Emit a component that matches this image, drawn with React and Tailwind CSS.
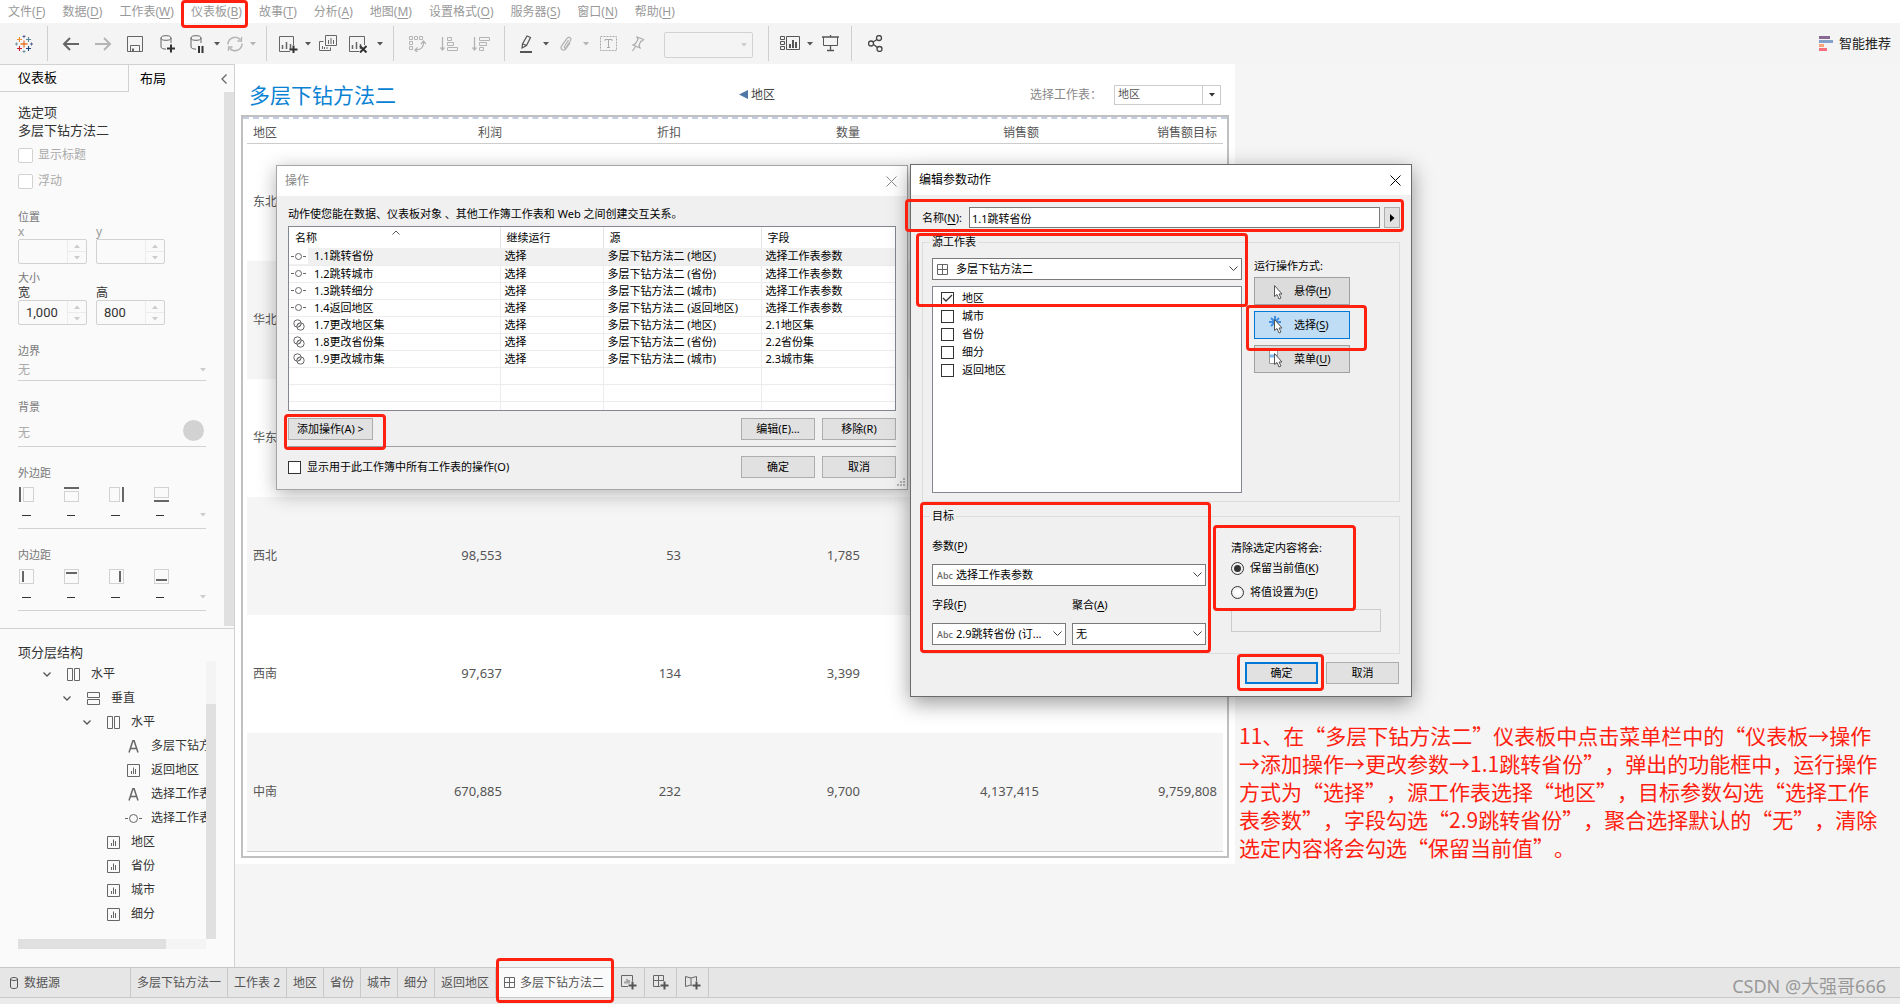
import { Fragment, useState } from 'react';

const MENUS = [
  ['文件', 'F'], ['数据', 'D'], ['工作表', 'W'], ['仪表板', 'B'], ['故事', 'T'], ['分析', 'A'],
  ['地图', 'M'], ['设置格式', 'O'], ['服务器', 'S'], ['窗口', 'N'], ['帮助', 'H'],
];

const REGIONS = [
  { name: '东北', values: ['', '', '', '', ''] },
  { name: '华北', values: ['', '', '', '', ''] },
  { name: '华东', values: ['', '', '', '', ''] },
  { name: '西北', values: ['98,553', '53', '1,785', '', ''] },
  { name: '西南', values: ['97,637', '134', '3,399', '', ''] },
  { name: '中南', values: ['670,885', '232', '9,700', '4,137,415', '9,759,808'] },
];

const ACTIONS = [
  { icon: 'param', name: '1.1跳转省份', source: '地区', field: '选择工作表参数' },
  { icon: 'param', name: '1.2跳转城市', source: '省份', field: '选择工作表参数' },
  { icon: 'param', name: '1.3跳转细分', source: '城市', field: '选择工作表参数' },
  { icon: 'param', name: '1.4返回地区', source: '返回地区', field: '选择工作表参数' },
  { icon: 'set', name: '1.7更改地区集', source: '地区', field: '2.1地区集' },
  { icon: 'set', name: '1.8更改省份集', source: '省份', field: '2.2省份集' },
  { icon: 'set', name: '1.9更改城市集', source: '城市', field: '2.3城市集' },
];

const TREE = [
  { indent: 'pl-[20px]', open: true, icon: 'horizontal', label: '水平' },
  { indent: 'pl-[40px]', open: true, icon: 'vertical', label: '垂直' },
  { indent: 'pl-[60px]', open: true, icon: 'horizontal', label: '水平' },
  { indent: 'pl-[80px]', icon: 'text', label: '多层下钻方法二' },
  { indent: 'pl-[80px]', icon: 'sheet', label: '返回地区' },
  { indent: 'pl-[80px]', icon: 'text', label: '选择工作表' },
  { indent: 'pl-[80px]', icon: 'param', label: '选择工作表' },
  { indent: 'pl-[60px]', icon: 'sheet', label: '地区' },
  { indent: 'pl-[60px]', icon: 'sheet', label: '省份' },
  { indent: 'pl-[60px]', icon: 'sheet', label: '城市' },
  { indent: 'pl-[60px]', icon: 'sheet', label: '细分' },
];

const SHEETS = ['多层下钻方法一', '工作表 2', '地区', '省份', '城市', '细分', '返回地区'];

/* ---------- icons ---------- */

const Icon = ({ w = 18, h = 18, className = '', children }) => (
  <svg
    width={w}
    height={h}
    viewBox={`0 0 ${w} ${h}`}
    fill="none"
    stroke="currentColor"
    className={`shrink-0 ${className}`}
    aria-hidden="true"
  >
    {children}
  </svg>
);

const LogoIcon = () => (
  <Icon w={18} h={18}>
    <path d="M9 5.5v7M5.5 9h7" stroke="#e8762d" strokeWidth="1.3" />
    <path d="M4.5 2v5M2 4.5h5" stroke="#eb912c" strokeWidth="1.1" />
    <path d="M13.5 2v5M11 4.5h5" stroke="#5b879b" strokeWidth="1.1" />
    <path d="M4.5 11v5M2 13.5h5" stroke="#c72035" strokeWidth="1.1" />
    <path d="M13.5 11v5M11 13.5h5" stroke="#1f457e" strokeWidth="1.1" />
    <path d="M9 0v3M7.500 1.500h3" stroke="#5c6692" />
    <path d="M9 15v3M7.500 16.500h3" stroke="#7199a6" />
    <path d="M1.500 7.500v3M0 9h3" stroke="#7199a6" />
    <path d="M16.500 7.500v3M15 9h3" stroke="#5c6692" />
  </Icon>
);

const Arrow = ({ flip }) => (
  <Icon w={18} h={16} className={flip ? 'text-[#b4b4b4]' : 'text-[#666]'}>
    <path d={flip ? 'M1 8h15M10 2l6 6-6 6' : 'M17 8H2M8 2L2 8l6 6'} strokeWidth="2" />
  </Icon>
);

const SaveIcon = () => (
  <Icon w={16} h={16}>
    <path d="M.5.5h15v15H.5zM3.500 15.500v-6h9v6M5.500 15v-2.500M6.500 15v-2.500" />
  </Icon>
);

const Database = () => (
  <>
    <ellipse cx="6" cy="3" rx="5" ry="2.300" />
    <path d="M1 3v9c0 1.200 2 2 5 2.200M11 3v5" />
  </>
);

const AddDataIcon = () => (
  <Icon w={15} h={18}>
    <Database />
    <path d="M11 9.500v8M7 13.500h8" stroke="#333" strokeWidth="2" />
  </Icon>
);

const PauseDataIcon = () => (
  <Icon w={14} h={18}>
    <Database />
    <path d="M9 11v7M12.500 11v7" stroke="#333" strokeWidth="2" />
  </Icon>
);

const RefreshIcon = () => (
  <Icon w={18} h={16} className="text-[#b4b4b4]">
    <path d="M2 8.500A7 7 0 0 1 14.500 4M16 7.500A7 7 0 0 1 3.500 12" strokeWidth="1.500" />
    <path d="M15.500 1v4h-4M2.500 15v-4h4" strokeWidth="1.300" />
  </Icon>
);

const Bars = ({ x = 4, y = 12 }) => (
  <path d={`M${x} ${y}v-4M${x + 4} ${y}v-7M${x + 8} ${y}v-5`} strokeWidth="1.500" />
);

const NewSheetIcon = () => (
  <Icon w={20} h={18}>
    <path d="M12 16.500H1.500v-15h14V10" />
    <Bars x={4.5} y={14} />
    <path d="M15.500 10.500v8M11.500 14.500h8" stroke="#333" strokeWidth="2" />
  </Icon>
);

const DuplicateIcon = () => (
  <Icon w={18} h={17}>
    <path d="M6.500.5h11v10h-11zM4.500 6.500h-4v9h11v-3M9.500 9V5M12 9V3M14.500 9V5M3.500 14v-3M5.500 14v-2M8 14v-2" />
  </Icon>
);

const ClearSheetIcon = () => (
  <Icon w={20} h={18}>
    <path d="M11 16.500H1.500v-15h15V10" />
    <Bars x={4.5} y={14} />
    <path d="M12 11l6.500 6.500M18.500 11L12 17.500" stroke="#333" strokeWidth="2" />
  </Icon>
);

const SwapIcon = () => (
  <Icon w={18} h={17} className="text-[#b4b4b4]">
    <path d="M1.500 1.500h3v3h-3zM6.500 1.500h3v3h-3zM11.500 1.500h3v3h-3zM1.500 6.500h3v3h-3zM1.500 11.500h3v3h-3z" />
    <path d="M15.500 7c.5 5-2.500 8-8 8M13 9l2.500-3 2.500 3M9.500 12.500L7 15l2.500 2.500" strokeWidth="1.300" />
  </Icon>
);

const SortIcon = ({ desc }) => (
  <Icon w={18} h={16} className="text-[#b4b4b4]">
    <path d="M2.500 1v13M.5 11.500l2 2.500 2-2.500" strokeWidth="1.300" />
    <path
      d={
        desc
          ? 'M7.500 1.500h10v3h-10zM7.500 6.500h7v3h-7zM7.500 11.500h4v3h-4z'
          : 'M7.500 1.500h4v3h-4zM7.500 6.500h6v3h-6zM7.500 11.500h10v3h-10z'
      }
    />
  </Icon>
);

const HighlightIcon = () => (
  <Icon w={14} h={18} className="text-[#555]">
    <path d="M3 13l.5-4L8 1l3.500 1.500L7.500 10.500 3 13zM4 9l3.500 1.500" strokeWidth="1.200" />
    <path d="M1 17h12" strokeWidth="2" />
  </Icon>
);

const ClipIcon = () => (
  <Icon w={14} h={16} className="text-[#b4b4b4]">
    <path
      d="M9.500 4L5.500 10.500c-.8 1.400.8 2.300 1.600 1L11.500 4.500c1.500-2.600-2-4.500-3.500-2L2.500 10c-1.800 3.200 2.500 5.800 4.500 2.700L11 7"
      strokeWidth="1.300"
    />
  </Icon>
);

const TextLabelIcon = () => (
  <Icon w={17} h={15} className="text-[#aaa]">
    <path d="M.5.5h16v14H.5z" strokeDasharray="2 1" />
    <path d="M5 5V3.500h7V5M8.500 3.500v8M7 11.500h3" />
  </Icon>
);

const PinIcon = () => (
  <Icon w={14} h={16} className="text-[#aaa]">
    <path d="M6 1l6.500 2.500-1 1.500-1.500 0-2 4 1 3-7-3 2.500-1.500 2.500-4zM4.500 10.500L1.500 15" strokeWidth="1.200" />
  </Icon>
);

const CardsIcon = () => (
  <Icon w={20} h={15} className="text-[#555]">
    <path d="M.5.5h4v3h-4zM.5 5.500h4v3h-4zM.5 10.500h4v3h-4zM6.500.5h13v13h-13z" />
    <path d="M10 12V8M13 12V4M16 12V6" strokeWidth="2" />
  </Icon>
);

const PresentIcon = () => (
  <Icon w={17} h={17} className="text-[#555]">
    <path d="M0 2h17M8.500 0v2M8.500 11v4M5 15.500h7" strokeWidth="1.300" />
    <path d="M1.500 2v8.500h14V2" />
  </Icon>
);

const ShareIcon = () => (
  <Icon w={15} h={17} className="text-[#444]">
    <circle cx="11" cy="3" r="2.500" strokeWidth="1.300" />
    <circle cx="3" cy="8.500" r="2.500" strokeWidth="1.300" />
    <circle cx="11.500" cy="14" r="2.500" strokeWidth="1.300" />
    <path d="M5 7l4-2.500M5.500 9.500l4 3" strokeWidth="1.300" />
  </Icon>
);

const ShowMeIcon = () => (
  <Icon w={14} h={15}>
    <path d="M0 1.500h11" stroke="#8a6a94" strokeWidth="3" />
    <path d="M0 5.500h14" stroke="#84a1cb" strokeWidth="3" />
    <path d="M0 9.500h5" stroke="#f8a378" strokeWidth="3" />
    <path d="M0 13.500h8" stroke="#fa6f7e" strokeWidth="3" />
  </Icon>
);

const Caret = ({ className = 'text-[#555]' }) => (
  <Icon w={6} h={4} className={className}>
    <path d="M0 0h6L3 3.500z" fill="currentColor" stroke="none" />
  </Icon>
);

const Chevron = () => (
  <Icon w={9} h={6} className="text-[#444]">
    <path d="M.5.5l4 4 4-4" />
  </Icon>
);

const DashboardIcon = () => (
  <Icon w={11} h={11} className="text-[#666]">
    <path d="M.5.5h10v10H.5zM5.500.5v10M.5 5.500h10" />
  </Icon>
);

const ParamIcon = () => (
  <Icon w={17} h={11} className="text-[#666]">
    <path d="M0 5.500h3M14 5.500h3" />
    <circle cx="8.500" cy="5.500" r="4" />
  </Icon>
);

const ActionIcon = ({ kind }) =>
  kind === 'param' ? (
    <Icon w={15} h={9} className="text-[#666]">
      <path d="M0 4.500h3M12 4.500h3" />
      <circle cx="7.500" cy="4.500" r="3" />
    </Icon>
  ) : (
    <Icon w={12} h={12} className="text-[#666]">
      <circle cx="4.500" cy="4.500" r="3.700" />
      <circle cx="7.500" cy="7.500" r="3.700" />
      <path d="M4 6.500L6.500 4M5.500 8L8 5.500" />
    </Icon>
  );

const TreeIcon = ({ kind }) => {
  if (kind === 'param') return <ParamIcon />;
  return (
    <Icon w={13} h={13} className="text-[#666]">
      {kind === 'horizontal' && <path d="M.5.5h5v12h-5zM7.500.5h5v12h-5z" />}
      {kind === 'vertical' && <path d="M.5.5h12v5H.5zM.5 7.500h12v5H.5z" />}
      {kind === 'text' && <path d="M2 12.500L6 .5h1l4 12M3.500 8.500h6" strokeWidth="1.500" />}
      {kind === 'sheet' && <path d="M.5.5h12v12H.5zM4.500 10V7M6.500 10V3.500M8.500 10V5" />}
    </Icon>
  );
};

/* arrow cursor, with a burst or a menu behind it */
const RunIcon = ({ kind }) => (
  <Icon w={18} h={18}>
    {kind === 'select' && (
      <path d="M7 0v12M1 6h12M3 2l8 8M11 2l-8 8" stroke="#3d8ce0" strokeWidth="2" />
    )}
    {kind === 'menu' && (
      <>
        <path d="M1.500.5h8v13h-8z" fill="#fff" stroke="#999" />
        <path d="M2 6h7" stroke="#7db8f0" strokeWidth="3" />
      </>
    )}
    <path d="M6.500 3.500v11l2.500-2 2 4.500 2-1-2-4h3z" fill="#fff" stroke="#555" />
  </Icon>
);

const CloseIcon = ({ className }) => (
  <Icon w={11} h={11} className={className}>
    <path d="M.5.5l10 10M10.500.5l-10 10" />
  </Icon>
);

/* side: which edge the bar stands on; inner: bar inside the dotted box */
const SpacingIcon = ({ side, inner }) => {
  const outerBars = { left: 'M1 0v15', top: 'M0 1h15', right: 'M14 0v15', bottom: 'M0 14h15' };
  const innerBars = { left: 'M4 2v11', top: 'M2 4h11', right: 'M11 2v11', bottom: 'M2 11h11' };
  const outerBoxes = {
    left: 'M4.500.5h10v14h-10z',
    top: 'M.5 4.500h14v10H.5z',
    right: 'M.5.5h10v14H.5z',
    bottom: 'M.5.5h14v10H.5z',
  };
  return (
    <Icon w={15} h={15}>
      <path d={inner ? 'M.5.5h14v14H.5z' : outerBoxes[side]} stroke="#aaa" strokeDasharray="1 1" />
      <path d={inner ? innerBars[side] : outerBars[side]} stroke="#666" strokeWidth="2" />
    </Icon>
  );
};

/* ---------- shared controls ---------- */

const Label = ({ text, k, end = '' }) => (
  <>
    {text}(<u className="underline-offset-2">{k}</u>){end}
  </>
);

const ToolButton = ({ size = 'w-7', label, children }) => (
  <button type="button" aria-label={label} className={`flex h-8 shrink-0 items-center justify-center text-[#666] ${size}`}>
    {children}
  </button>
);

const Divider = () => <div className="mx-[7px] h-[35px] w-px shrink-0 bg-[#cfcfcf]" />;

const Dropdown = ({ id, label, options, icon, pad = 'pl-1', className = '' }) => (
  <div className={`grid h-[22px] items-center ${className}`}>
    <select
      id={id}
      aria-label={label}
      className={`col-start-1 row-start-1 h-full w-full appearance-none border border-[#7a7a7a] bg-white pr-4 ${pad}`}
    >
      {options.map((o) => (
        <option key={o}>{o}</option>
      ))}
    </select>
    {icon && <span className="pointer-events-none col-start-1 row-start-1 justify-self-start pl-[5px]">{icon}</span>}
    <span className="pointer-events-none col-start-1 row-start-1 justify-self-end pr-1">
      <Chevron />
    </span>
  </div>
);

const StringType = () => <span className="text-[9px] font-medium text-[#666]">Abc</span>;

const PushButton = ({ primary, className = 'w-[74px]', children }) => (
  <button
    type="button"
    className={`h-[22px] bg-[#e1e1e1] leading-4 ${primary ? 'border-2 border-[#0078d7]' : 'border border-[#adadad]'} ${className}`}
  >
    {children}
  </button>
);

const CheckBox = ({ id, defaultChecked, className }) => (
  <span className="grid shrink-0 place-items-center">
    <input
      id={id}
      type="checkbox"
      defaultChecked={defaultChecked}
      className={`peer col-start-1 row-start-1 appearance-none border bg-white ${className}`}
    />
    <Icon w={11} h={9} className="pointer-events-none invisible col-start-1 row-start-1 text-[#333] peer-checked:visible">
      <path d="M1 4l3 3 6-6" strokeWidth="1.300" />
    </Icon>
  </span>
);

const Spinner = ({ id, label, value = '', dark }) => (
  <div className="w-[69px]">
    <label htmlFor={id} className={`block text-[12px] leading-[14px] ${dark ? 'text-[#333]' : 'text-[#999]'}`}>
      {label}
    </label>
    <div className="flex h-[25px] rounded-xs border border-[#d2d2d2]">
      <input
        id={id}
        type="text"
        defaultValue={value}
        className="w-12 bg-transparent pl-[7px] font-[family-name:Roboto,sans-serif] text-[13px] text-[#333]"
      />
      <div className="flex flex-1 flex-col border-l border-[#ececec] text-[#ccc]">
        <button type="button" aria-label={`${label} +`} className="flex flex-1 items-center justify-center border-b border-[#ececec]">
          <Caret className="rotate-180" />
        </button>
        <button type="button" aria-label={`${label} -`} className="flex flex-1 items-center justify-center">
          <Caret className="" />
        </button>
      </div>
    </div>
  </div>
);

/* ---------- page parts ---------- */

const MenuBar = () => (
  <nav className="flex h-[23px] shrink-0 items-end gap-[17px] bg-white px-2 pb-0.5 text-[12px] text-[#999]">
    {MENUS.map(([text, k]) => (
      <button key={text} type="button" className="shrink-0 leading-[18px]">
        <Label text={text} k={k} />
      </button>
    ))}
  </nav>
);

const Toolbar = () => (
  <header className="flex h-[41px] shrink-0 items-center bg-[#f4f4f4] pr-[9px] pl-2">
    <ToolButton size="w-8" label="开始"><LogoIcon /></ToolButton>
    <Divider />
    <ToolButton size="w-8" label="撤销"><Arrow /></ToolButton>
    <ToolButton size="w-8" label="重做"><Arrow flip /></ToolButton>
    <ToolButton size="w-8" label="保存"><SaveIcon /></ToolButton>
    <ToolButton size="w-8" label="新建数据源"><AddDataIcon /></ToolButton>
    <ToolButton label="暂停自动更新"><PauseDataIcon /></ToolButton>
    <ToolButton size="w-3" label="更新选项"><Caret /></ToolButton>
    <ToolButton size="w-6" label="运行更新"><RefreshIcon /></ToolButton>
    <ToolButton size="w-3" label="运行选项"><Caret className="text-[#b4b4b4]" /></ToolButton>
    <Divider />
    <ToolButton label="新建工作表"><NewSheetIcon /></ToolButton>
    <ToolButton size="w-3" label="新建选项"><Caret /></ToolButton>
    <ToolButton label="复制"><DuplicateIcon /></ToolButton>
    <ToolButton size="w-8" label="清除"><ClearSheetIcon /></ToolButton>
    <ToolButton size="w-3" label="清除选项"><Caret /></ToolButton>
    <Divider />
    <ToolButton size="w-8" label="交换行和列"><SwapIcon /></ToolButton>
    <ToolButton size="w-8" label="升序"><SortIcon /></ToolButton>
    <ToolButton size="w-8" label="降序"><SortIcon desc /></ToolButton>
    <Divider />
    <ToolButton label="突出显示"><HighlightIcon /></ToolButton>
    <ToolButton size="w-3" label="突出显示选项"><Caret /></ToolButton>
    <ToolButton label="组成员"><ClipIcon /></ToolButton>
    <ToolButton size="w-3" label="组选项"><Caret className="text-[#b4b4b4]" /></ToolButton>
    <ToolButton size="w-8" label="显示标记标签"><TextLabelIcon /></ToolButton>
    <ToolButton label="固定轴"><PinIcon /></ToolButton>
    <div className="mr-2 ml-3 grid h-[23px] w-[89px] items-center">
      <select aria-label="适合" className="col-start-1 row-start-1 h-full w-full appearance-none rounded-xs border border-[#d2d2d2]" />
      <span className="pointer-events-none col-start-1 row-start-1 justify-self-end pr-1.5">
        <Caret className="text-[#ccc]" />
      </span>
    </div>
    <Divider />
    <ToolButton label="显示/隐藏卡"><CardsIcon /></ToolButton>
    <ToolButton size="w-3" label="卡选项"><Caret /></ToolButton>
    <ToolButton label="演示模式"><PresentIcon /></ToolButton>
    <Divider />
    <ToolButton size="w-8" label="共享"><ShareIcon /></ToolButton>
    <button type="button" className="ml-auto flex shrink-0 items-center gap-1.5 text-[13px] text-[#222]">
      <ShowMeIcon />
      智能推荐
    </button>
  </header>
);

const SpacingRow = ({ title, inner }) => (
  <section className="mt-[18px]">
    <h3 className="text-[11px] leading-4 text-[#777]">{title}</h3>
    <div className="mt-1.5 flex gap-[30px] pl-px">
      {['left', 'top', 'right', 'bottom'].map((side) => (
        <SpacingIcon key={side} side={side} inner={inner} />
      ))}
    </div>
    <div className="flex h-[27px] items-center gap-9 border-b border-[#d2d2d2] pl-1">
      {['left', 'top', 'right', 'bottom'].map((side) => (
        <span key={side} className="h-px w-[9px] bg-[#333]" />
      ))}
      <Caret className="ml-auto text-[#ccc]" />
    </div>
  </section>
);

const LayoutPanel = () => (
  <div className="flex shrink-0">
    <div className="min-w-0 flex-1 pt-[11px] pr-[18px] pb-[17px] pl-[18px]">
      <div className="text-[13px] leading-[18px] text-[#333]">
        <p>选定项</p>
        <p>多层下钻方法二</p>
      </div>
      <div className="mt-[3px] text-[12px] text-[#aaa]">
        {['显示标题', '浮动'].map((text) => (
          <div key={text} className="flex h-[26px] items-center gap-[5px]">
            <CheckBox id={text} className="size-[15px] rounded-xs border-[#d2d2d2]" />
            <label htmlFor={text}>{text}</label>
          </div>
        ))}
      </div>
      <h3 className="mt-[15px] text-[11px] leading-4 text-[#777]">位置</h3>
      <div className="flex gap-[9px]">
        <Spinner id="pos-x" label="x" />
        <Spinner id="pos-y" label="y" />
      </div>
      <h3 className="mt-1.5 text-[11px] leading-4 text-[#777]">大小</h3>
      <div className="flex gap-[9px]">
        <Spinner id="size-w" label="宽" value="1,000" dark />
        <Spinner id="size-h" label="高" value="800" dark />
      </div>
      <label htmlFor="border" className="mt-[18px] block text-[11px] leading-4 text-[#777]">边界</label>
      <div className="grid h-[22px] items-center border-b border-[#d2d2d2] text-[12px] text-[#aaa]">
        <select id="border" className="col-start-1 row-start-1 w-full appearance-none">
          <option>无</option>
        </select>
        <span className="pointer-events-none col-start-1 row-start-1 justify-self-end">
          <Caret className="text-[#ccc]" />
        </span>
      </div>
      <h3 className="mt-[18px] text-[11px] leading-4 text-[#777]">背景</h3>
      <div className="flex h-8 items-end justify-between border-b border-[#d2d2d2] pr-0.5 pb-[5px] text-[12px] leading-4 text-[#aaa]">
        <span>无</span>
        <button type="button" aria-label="背景颜色" className="size-[21px] rounded-full bg-[#d2d2d2]" />
      </div>
      <SpacingRow title="外边距" />
      <SpacingRow title="内边距" inner />
    </div>
    <div className="mb-0.5 w-2.5 bg-[#e0e0e0]" />
  </div>
);

const HierarchyPanel = () => (
  <section className="flex min-h-0 flex-1 flex-col border-t border-[#d2d2d2] pt-3.5 pr-[18px] pb-[18px] pl-[18px] text-[#333]">
    <h3 className="text-[13px] leading-[18px]">项分层结构</h3>
    <div className="flex min-h-0 flex-1">
      <ul className="min-w-0 flex-1 overflow-hidden pt-px text-[12px]">
        {TREE.map((node, i) => (
          <li key={i} className={`flex h-6 items-center whitespace-nowrap ${node.indent}`}>
            <span className="flex w-[18px] shrink-0 justify-center">
              {node.open && (
                <Icon w={8} h={5} className="text-[#555]">
                  <path d="M.5.5L4 4 7.500.5" strokeWidth="1.300" />
                </Icon>
              )}
            </span>
            <span className="flex w-[35px] shrink-0 justify-center">
              <TreeIcon kind={node.icon} />
            </span>
            <span>{node.label}</span>
          </li>
        ))}
      </ul>
      <div className="flex w-2.5 flex-col bg-[#f4f4f4] pt-[43px]">
        <div className="flex-1 bg-[#e0e0e0]" />
      </div>
    </div>
    <div className="mr-2.5 h-2.5 bg-[#f4f4f4] pr-10">
      <div className="h-full bg-[#e0e0e0]" />
    </div>
  </section>
);

const SideBar = () => (
  <aside className="flex w-[235px] shrink-0 flex-col border-t border-r border-[#d2d2d2] bg-[#fafafa]">
    <div className="flex h-[27px] shrink-0 text-[13px] text-black">
      <button type="button" className="w-[129px] border-r border-b border-[#d2d2d2] pl-[18px] text-left">仪表板</button>
      <button type="button" className="pl-[11px]">布局</button>
      <button type="button" aria-label="折叠" className="mr-[7px] ml-auto">
        <Icon w={6} h={10} className="text-[#666]">
          <path d="M5.500.5L1 5l4.500 4.500" strokeWidth="1.300" />
        </Icon>
      </button>
    </div>
    <LayoutPanel />
    <HierarchyPanel />
  </aside>
);

const Dashboard = () => (
  <main className="flex h-[800px] w-[1000px] shrink-0 flex-col bg-white px-1.5 pb-1.5 text-[12px] text-[#555]">
    <div className="flex h-[51px] items-center pt-2.5 pl-2">
      <h1 className="w-[490px] text-[21px] leading-7 text-[#0a82d4]">多层下钻方法二</h1>
      <a href="#region" className="flex items-center gap-[3px] text-[#444]">
        <Icon w={9} h={9}>
          <path d="M9 0v9L0 4.500z" fill="#4e79a7" stroke="none" />
        </Icon>
        地区
      </a>
      <label htmlFor="sheet-param" className="ml-auto pr-3 text-[#888]">选择工作表：</label>
      <div className="mr-2 grid h-5 w-[107px] items-center">
        <select
          id="sheet-param"
          className="col-start-1 row-start-1 h-full w-full appearance-none border border-[#ccc] bg-white pl-[3px] text-[11px] text-[#555]"
        >
          <option>地区</option>
        </select>
        <span className="pointer-events-none col-start-1 row-start-1 flex h-full w-[19px] items-center justify-center justify-self-end border-l border-[#ccc]">
          <Caret className="text-[#333]" />
        </span>
      </div>
    </div>
    <div className="flex min-h-0 flex-1 flex-col border-2 border-[#c0c0c0]">
      <div className="border-t-2 border-dashed border-[#c3cee2]" />
      <div className="mx-1 border-b border-[#ccc]">
        <table className="w-full table-fixed">
          <colgroup>
            <col className="w-[82px]" />
            <col className="w-[179px]" />
            <col className="w-[179px]" />
            <col className="w-[179px]" />
            <col className="w-[179px]" />
            <col />
          </colgroup>
          <thead>
            <tr className="h-[24px] border-b border-[#ccc]">
              <th className="pt-1 pl-1.5 text-left leading-4 font-normal">地区</th>
              {['利润', '折扣', '数量', '销售额', '销售额目标'].map((text) => (
                <th key={text} className="pt-1 pr-1.5 text-right leading-4 font-normal">{text}</th>
              ))}
            </tr>
          </thead>
          <tbody>
            {REGIONS.map((row) => (
              <tr key={row.name} className="h-[118px] even:bg-[#f5f5f5]">
                <th className="pl-1.5 text-left font-normal">{row.name}</th>
                {row.values.map((v, i) => (
                  <td key={i} className="pr-1.5 text-right text-[13px]">{v}</td>
                ))}
              </tr>
            ))}
          </tbody>
        </table>
      </div>
    </div>
  </main>
);

const ActionsDialog = () => (
  <section
    role="dialog"
    aria-label="操作"
    className="absolute top-[165px] left-[276px] w-[632px] border border-[#a5a5a5] bg-[#f0f0f0] text-[11px] leading-4 text-black shadow-[0_4px_18px_rgba(0,0,0,0.3)]"
  >
    <div className="flex h-[30px] items-center justify-between bg-white pr-2.5 pl-2 text-[12px] text-[#888]">
      <h2>操作</h2>
      <button type="button" aria-label="关闭"><CloseIcon className="text-[#888]" /></button>
    </div>
    <div className="px-[11px] pt-2.5 pb-[11px]">
      <p>动作使您能在数据、仪表板对象 、其他工作簿工作表和 Web 之间创建交互关系。</p>
      <div className="mt-1 h-[185px] overflow-hidden border border-[#828790] bg-white">
        <table className="w-full table-fixed">
          <colgroup>
            <col className="w-[211px]" />
            <col className="w-[103px]" />
            <col className="w-[158px]" />
            <col />
          </colgroup>
          <thead>
            <tr className="h-[21px]">
              {['名称', '继续运行', '源', '字段'].map((text) => (
                <th key={text} className="border-r border-[#e5e5e5] px-1.5 text-left font-normal last:border-r-0">
                  <span className="flex items-center">
                    {text}
                    {text === '名称' && (
                      <Icon w={8} h={16} className="mr-[94px] ml-auto text-[#555]">
                        <path d="M.5 4.500L4 1l3.500 3.500" />
                      </Icon>
                    )}
                  </span>
                </th>
              ))}
            </tr>
          </thead>
          <tbody>
            {ACTIONS.map((a, i) => (
              <tr key={a.name} className={`h-[17px] border-b border-[#ececec] ${i === 0 ? 'bg-[#f0f0f0]' : ''}`}>
                <td className="border-r border-[#ececec] p-0">
                  <div className="flex items-center">
                    <span className="flex h-4 w-[19px] items-center justify-center bg-white">
                      <ActionIcon kind={a.icon} />
                    </span>
                    <span className="pl-1.5">{a.name}</span>
                  </div>
                </td>
                <td className="border-r border-[#ececec] px-1 py-0">选择</td>
                <td className="border-r border-[#ececec] px-1 py-0">多层下钻方法二 ({a.source})</td>
                <td className="px-1 py-0">{a.field}</td>
              </tr>
            ))}
            {[0, 1, 2].map((i) => (
              <tr key={i} className="h-[17px] border-b border-[#ececec]">
                <td className="border-r border-[#ececec] p-0" />
                <td className="border-r border-[#ececec] p-0" />
                <td className="border-r border-[#ececec] p-0" />
                <td className="p-0" />
              </tr>
            ))}
          </tbody>
        </table>
      </div>
      <div className="mt-[7px] flex gap-[7px] border-b border-[#a0a0a0] pb-1.5">
        <PushButton className="mr-auto w-[85px]">添加操作(A) &gt;</PushButton>
        <PushButton>编辑(E)...</PushButton>
        <PushButton>移除(R)</PushButton>
      </div>
      <div className="mt-[9px] flex items-center gap-[7px]">
        <div className="mr-auto flex items-center gap-1.5">
          <CheckBox id="show-all" className="size-[13px] border-[#333]" />
          <label htmlFor="show-all">显示用于此工作簿中所有工作表的操作(O)</label>
        </div>
        <PushButton>确定</PushButton>
        <PushButton>取消</PushButton>
      </div>
    </div>
    <Icon w={9} h={9} className="absolute right-0.5 bottom-0.5">
      <path d="M7 1h2M4 4h2M7 4h2M1 7h2M4 7h2M7 7h2" stroke="#b5b5b5" strokeWidth="2" />
    </Icon>
  </section>
);

const ParameterDialog = () => {
  const [run, setRun] = useState('select');
  const runModes = [
    ['hover', '悬停', 'H'],
    ['select', '选择', 'S'],
    ['menu', '菜单', 'U'],
  ];

  return (
    <section
      role="dialog"
      aria-label="编辑参数动作"
      className="absolute top-[164px] left-[910px] w-[502px] border border-[#6b6b6b] bg-[#f0f0f0] text-[11px] leading-4 text-black shadow-[0_6px_20px_rgba(0,0,0,0.4)]"
    >
      <div className="flex h-[30px] items-center justify-between bg-white pr-2.5 pl-2 text-[12px]">
        <h2>编辑参数动作</h2>
        <button type="button" aria-label="关闭"><CloseIcon className="text-black" /></button>
      </div>
      <div className="px-[11px] pt-3 pb-3">
        <div className="flex h-[21px] items-center">
          <label htmlFor="action-name" className="w-[47px] shrink-0">
            <Label text="名称" k="N" end=":" />
          </label>
          <input
            id="action-name"
            type="text"
            defaultValue="1.1跳转省份"
            className="h-full min-w-0 flex-1 border border-[#7a7a7a] bg-white pl-0.5"
          />
          <button type="button" aria-label="插入" className="ml-1 flex h-full w-4 items-center justify-center border border-[#adadad] bg-[#e1e1e1]">
            <Icon w={5} h={8}>
              <path d="M0 0v8l4.500-4z" fill="#000" stroke="none" />
            </Icon>
          </button>
        </div>

        <fieldset className="mt-1.5 flex gap-3 border border-[#dcdcdc] px-[9px] pt-2 pb-2">
          <legend className="-ml-0.5 px-0.5">源工作表</legend>
          <div className="w-[310px]">
            <Dropdown label="源工作表" options={['多层下钻方法二']} icon={<DashboardIcon />} pad="pl-[23px]" />
            <ul className="mt-1.5 h-[207px] border border-[#828790] bg-white pt-[2px] pl-2">
              {['地区', '城市', '省份', '细分', '返回地区'].map((text, i) => (
                <li key={text} className="flex h-[18px] items-center gap-2">
                  <CheckBox id={`src-${i}`} defaultChecked={i === 0} className="size-[13px] border-[#333]" />
                  <label htmlFor={`src-${i}`}>{text}</label>
                </li>
              ))}
            </ul>
          </div>
          <div className="flex w-24 flex-col gap-1.5">
            <p className="-mb-[3px] whitespace-nowrap">运行操作方式:</p>
            {runModes.map(([kind, text, k]) => (
              <button
                key={kind}
                type="button"
                aria-pressed={run === kind}
                onClick={() => setRun(kind)}
                className={`flex h-7 items-center gap-2 border pl-[13px] ${
                  run === kind ? 'border-[#0078d7] bg-[#bfddf5]' : 'border-[#a0a0a0] bg-[#dcdcdc]'
                }`}
              >
                <RunIcon kind={kind} />
                <span><Label text={text} k={k} /></span>
              </button>
            ))}
          </div>
        </fieldset>

        <fieldset className="mt-1.5 flex gap-[25px] border border-[#dcdcdc] px-[9px] pb-2">
          <legend className="-ml-0.5 px-0.5">目标</legend>
          <div className="grid w-[274px] grid-cols-2 gap-x-1.5 pt-3.5">
            <label htmlFor="target-param" className="col-span-2"><Label text="参数" k="P" /></label>
            <Dropdown
              id="target-param"
              options={['选择工作表参数']}
              icon={<StringType />}
              pad="pl-[23px]"
              className="col-span-2 mt-2.5 mb-[11px]"
            />
            <label htmlFor="target-field"><Label text="字段" k="F" /></label>
            <label htmlFor="target-agg"><Label text="聚合" k="A" /></label>
            <Dropdown
              id="target-field"
              options={['2.9跳转省份 (订...']}
              icon={<StringType />}
              pad="pl-[23px]"
              className="mt-2.5"
            />
            <Dropdown id="target-agg" options={['无']} pad="pl-[3px]" className="mt-2.5" />
          </div>
          <div className="w-[150px] pt-4">
            <p>清除选定内容将会:</p>
            {[['保留当前值', 'K'], ['将值设置为', 'E']].map(([text, k]) => (
              <div key={k} className="flex h-6 items-center gap-1.5">
                <input
                  id={`clear-${k}`}
                  type="radio"
                  name="clear"
                  defaultChecked={k === 'K'}
                  className="size-[13px] appearance-none rounded-full border border-[#333] bg-white bg-clip-content p-[2px] checked:bg-[#333]"
                />
                <label htmlFor={`clear-${k}`}><Label text={text} k={k} /></label>
              </div>
            ))}
            <input type="text" aria-label="值" disabled className="mt-[5px] block h-[23px] w-full border border-[#ccc]" />
          </div>
        </fieldset>

        <div className="mt-2 flex justify-end gap-2 pr-px">
          <PushButton primary className="w-[73px]">确定</PushButton>
          <PushButton className="w-[73px]">取消</PushButton>
        </div>
      </div>
    </section>
  );
};

const NewTabIcon = ({ kind }) => (
  <Icon w={16} h={15} className="text-[#666]">
    {kind === 'sheet' && <path d="M7 11.500H.5V.5h11V6M4 8.500v-2M6 8.500V4M8 8.500V5" />}
    {kind === 'dashboard' && <path d="M7 11.500H.5V.5h10V6M5.500.5v11M.5 5.500h10" />}
    {kind === 'story' && <path d="M7 10.500L6 10l-5.500 1.500v-10L6 3l5.500-1.500V6M6 3v7" />}
    <path d="M11.500 6.500v8M7.500 10.500h8" stroke="#555" strokeWidth="2" />
  </Icon>
);

const TabBar = () => (
  <footer className="shrink-0 bg-[#ebebeb] pb-1.5">
    <div className="flex h-[31px] items-stretch border-y border-[#c8c8c8] bg-[#e6e6e6] text-[12px] text-[#555]">
      <button type="button" className="flex w-[131px] items-center gap-1.5 border-r border-[#c8c8c8] pl-2.5">
        <Icon w={8} h={12} className="text-[#555]">
          <path d="M.5 2v8c0 2 7 2 7 0V2c0-2-7-2-7 0s7 2 7 0" />
        </Icon>
        数据源
      </button>
      {SHEETS.map((name) => (
        <button key={name} type="button" className="border-r border-[#c8c8c8] px-1.5">{name}</button>
      ))}
      <button type="button" className="flex items-center gap-[5px] border-r border-[#c8c8c8] bg-[#fafafa] px-2">
        <DashboardIcon />
        多层下钻方法二
      </button>
      {['sheet', 'dashboard', 'story'].map((kind) => (
        <button key={kind} type="button" aria-label={kind} className="flex w-8 items-center justify-center border-r border-[#c8c8c8]">
          <NewTabIcon kind={kind} />
        </button>
      ))}
    </div>
  </footer>
);

/* red marker boxes lying over the steps to follow */
const MARKS = [
  'left-[181px] top-0 h-7 w-[67px]',
  'left-[284px] top-[414px] h-[36px] w-[102px]',
  'left-[905px] top-[199px] h-[33px] w-[499px]',
  'left-[916px] top-[233px] h-[74px] w-[332px]',
  'left-[1246px] top-[305px] h-[46px] w-[121px]',
  'left-[920px] top-[502px] h-[151px] w-[291px]',
  'left-[1213px] top-[525px] h-[86px] w-[143px]',
  'left-[1237px] top-[654px] h-[37px] w-[87px]',
  'left-[496px] top-[958px] h-[45px] w-[118px]',
];

const NOTE = [
  '11、在“多层下钻方法二”仪表板中点击菜单栏中的“仪表板→操作',
  '→添加操作→更改参数→1.1跳转省份”，弹出的功能框中，运行操作',
  '方式为“选择”，源工作表选择“地区”，目标参数勾选“选择工作',
  '表参数”，字段勾选“2.9跳转省份”，聚合选择默认的“无”，清除',
  '选定内容将会勾选“保留当前值”。',
];

export default function App() {
  return (
    <div
      lang="zh-CN"
      className="relative flex h-screen flex-col overflow-hidden bg-[#f5f5f5] font-[family-name:'Noto_Sans','Noto_Sans_CJK_SC',sans-serif]"
    >
      <MenuBar />
      <Toolbar />
      <div className="flex min-h-0 flex-1">
        <SideBar />
        <Dashboard />
      </div>
      <TabBar />

      <ActionsDialog />
      <ParameterDialog />

      <p className="absolute top-[721px] left-[1239px] font-[family-name:'Noto_Sans_CJK_SC',sans-serif] text-[21px] leading-7 whitespace-nowrap text-[#ff1e10] [text-spacing-trim:space-all]">
        {NOTE.map((line) => (
          <Fragment key={line}>
            {line}
            <br />
          </Fragment>
        ))}
      </p>
      {MARKS.map((pos) => (
        <div key={pos} className={`pointer-events-none absolute rounded-sm border-3 border-[#ff2010] ${pos}`} />
      ))}
      <p className="absolute right-3.5 bottom-1.5 text-[18px] leading-6 text-[#999]">CSDN @大强哥666</p>
    </div>
  );
}
